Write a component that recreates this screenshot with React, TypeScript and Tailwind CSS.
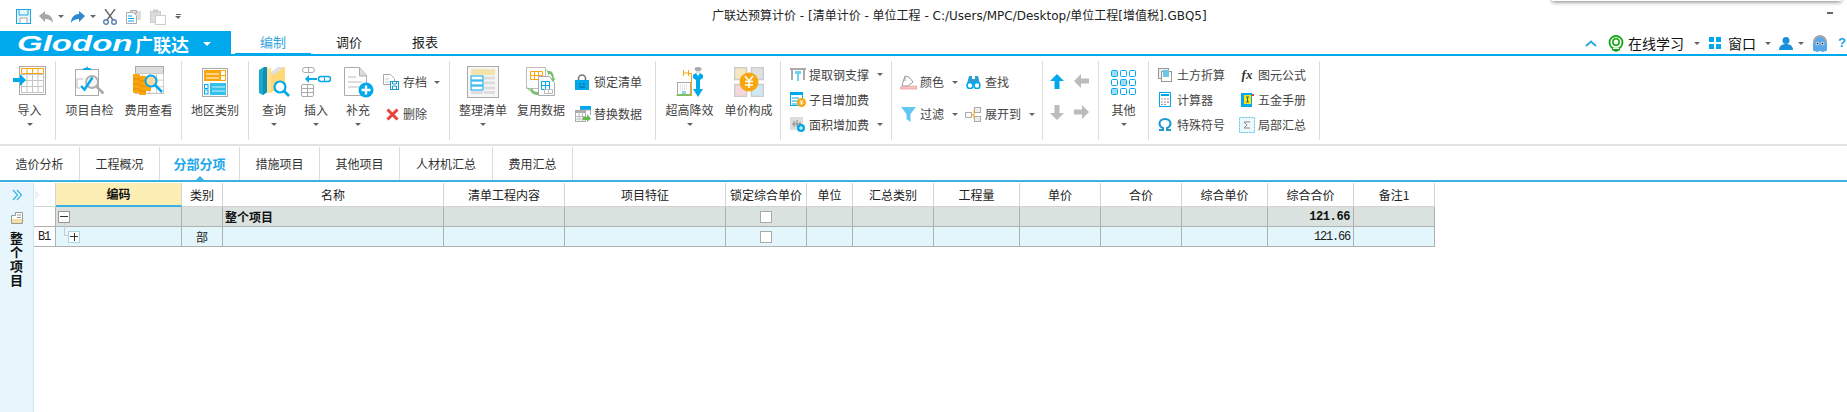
import type { ReactNode } from 'react'

const CJK = '[font-family:"Noto_Sans_CJK_SC","Liberation_Sans",sans-serif]'
const BLUE = '#00a8ec'
const ORANGE = '#f9a60e'
const GRAY = '#b4b4b4'

const COLS = 'grid grid-cols-[22px_126px_41px_221px_121px_161px_81px_46px_81px_86px_81px_81px_86px_86px_81px]'

function Caret({ className = '' }: { className?: string }) {
  return <span className={`inline-block w-0 h-0 border-x-[3.5px] border-x-transparent border-t-[3.5px] border-t-[#666] ${className}`} />
}

function Svg({ w, h, children }: { w: number; h: number; children: ReactNode }) {
  return (
    <svg width={w} height={h} viewBox={`0 0 ${w} ${h}`} fill="none" className="block shrink-0">
      {children}
    </svg>
  )
}

function Table32({ x, y, cols, rows, cw, ch, color = GRAY }: { x: number; y: number; cols: number; rows: number; cw: number; ch: number; color?: string }) {
  const lines = []
  for (let i = 0; i <= cols; i++) lines.push(<path key={`c${i}`} d={`M${x + i * cw} ${y}V${y + rows * ch}`} stroke={color} />)
  for (let i = 0; i <= rows; i++) lines.push(<path key={`r${i}`} d={`M${x} ${y + i * ch}H${x + cols * cw}`} stroke={color} />)
  return <>{lines}</>
}

/* ribbon large icons */
const ImportIcon = (
  <Svg w={34} h={32}>
    <rect x="6.5" y="0.5" width="26" height="28" fill="#fff" stroke="#aaa" />
    <Table32 x={8.5} y={2.5} cols={4} rows={1} cw={5.5} ch={5} color={ORANGE} />
    <Table32 x={8.5} y={8.5} cols={4} rows={3} cw={5.5} ch={6} color="#c4c4c4" />
    <path d="M0 12h7V8l6 6-6 6v-4H0z" fill={BLUE} />
  </Svg>
)
const CheckIcon = (
  <Svg w={32} h={32}>
    <rect x="1.5" y="3.5" width="23" height="26" stroke="#aaa" fill="#fff" />
    <path d="M8 4h10l-2-2h-2l-1-2-1 2h-2z" fill={BLUE} />
    <path d="M3 13h6M3 13v9h3" stroke="#bbb" />
    <circle cx="18" cy="16" r="6" stroke="#b0b0b0" strokeWidth="1.8" fill="#f4f4f4" />
    <path d="M22.500 20.500l7 7" stroke="#aaa" strokeWidth="2.6" />
    <path d="M7 20l3.500 3.500 8-12" stroke={BLUE} strokeWidth="2.4" />
  </Svg>
)
const FeeIcon = (
  <Svg w={32} h={32}>
    <rect x="2.5" y="0.5" width="28" height="27" fill="#fff" stroke="#aaa" />
    <rect x="3" y="1" width="27" height="6" fill="#ddd" />
    <Table32 x={2.5} y={7.5} cols={4} rows={3} cw={7} ch={6.6} color="#ccc" />
    <rect x="0" y="8" width="7" height="19" rx="1" fill={ORANGE} />
    <rect x="6" y="10" width="7" height="19" rx="1" fill={ORANGE} />
    <path d="M0 13h7M0 18h7M0 23h7M6 15h7M6 20h7M6 25h7" stroke="#e08a00" />
    <rect x="13" y="12" width="5" height="13" fill={ORANGE} />
    <circle cx="18" cy="15" r="5.5" fill="#fbd9a0" stroke={BLUE} strokeWidth="2" />
    <path d="M22 19l7 7" stroke={BLUE} strokeWidth="2.5" />
  </Svg>
)
const RegionIcon = (
  <Svg w={26} h={29}>
    <rect x="0.5" y="0.5" width="25" height="28" fill="#fff" stroke="#aaa" />
    <rect x="2" y="2" width="22" height="11" fill={ORANGE} />
    <path d="M4 6h13M4 10h13" stroke="#fff" />
    <rect x="19" y="3" width="4" height="4" fill="#fff" />
    <rect x="19" y="8" width="4" height="4" fill="#fff" />
    <rect x="8" y="15" width="16" height="12" fill="#33c0ea" />
    <path d="M10 19h13M10 23h13" stroke="#d5f1fb" />
    <rect x="2.5" y="16.5" width="3.5" height="4" stroke={BLUE} />
    <rect x="2.5" y="22" width="3.5" height="4" stroke={BLUE} />
  </Svg>
)
const BookIcon = (
  <Svg w={32} h={32}>
    <path d="M1 4l5-3h3v25l-4 3-4-2z" fill="#19aacb" />
    <path d="M6 1h3v25l-4 3V5z" fill="#0d90b8" />
    <path d="M9 2h4v25H9z" fill="#ffe08e" />
    <path d="M13 7l8-6h6v24H15l-2 2z" fill="#ffd878" />
    <path d="M13 6l7-5h6l-9 7-4 1z" fill="#e0e0e0" />
    <circle cx="22" cy="21" r="5.5" fill="#fff" stroke={BLUE} strokeWidth="2.2" />
    <path d="M26 25l5 5" stroke={BLUE} strokeWidth="2.6" />
  </Svg>
)
const InsertIcon = (
  <Svg w={31} h={30}>
    <rect x="1.5" y="0.5" width="12" height="5" rx="2.5" stroke="#aaa" />
    <path d="M7.5 1v4" stroke="#aaa" />
    <rect x="17.5" y="9.5" width="12" height="5" rx="2.5" stroke={BLUE} strokeWidth="1.4" />
    <path d="M23.5 10v4" stroke={BLUE} />
    <path d="M16 11H8V8l-4 4 4 4v-3h8z" fill={BLUE} />
    <rect x="0.5" y="17.5" width="12" height="12" rx="1.5" stroke="#aaa" />
    <path d="M0 21.5h12M0 25.5h12M6.5 18v12" stroke="#aaa" />
  </Svg>
)
const AddDocIcon = (
  <Svg w={31} h={31}>
    <path d="M1.5 0.5h15l7 8v20h-22z" fill="#fff" stroke="#aaa" />
    <path d="M16.5 1v8h7" fill="#ddd" stroke="#aaa" />
    <path d="M5 10h8M5 15h14M5 20h11" stroke="#ddd" strokeWidth="2" />
    <circle cx="23" cy="23" r="7.5" fill={BLUE} />
    <path d="M18.5 23h9M23 18.5v9" stroke="#fff" strokeWidth="2.4" />
  </Svg>
)
const ListIcon = (
  <Svg w={32} h={32}>
    <rect x="0.5" y="0.5" width="31" height="31" fill="#f6f6f6" stroke="#aaa" />
    <rect x="4" y="3" width="24" height="6" fill="#f5e3ac" />
    <rect x="4" y="10" width="12" height="4" fill="#fff" stroke={BLUE} />
    <rect x="4" y="15" width="12" height="4" fill="#fff" stroke={BLUE} />
    <rect x="4" y="20" width="12" height="4" fill="#fff" stroke={BLUE} />
    <rect x="4" y="25" width="12" height="3" fill="#ddd" />
    <path d="M17 12h11M17 17h11M17 22h11M17 26.5h11" stroke="#ddd" strokeWidth="3" />
  </Svg>
)
const ReuseIcon = (
  <Svg w={30} h={31}>
    <rect x="0.5" y="0.5" width="19" height="21" fill="#fff" stroke="#bbb" />
    <Table32 x={4.5} y={4.5} cols={3} rows={2} cw={4} ch={4} color={ORANGE} />
    <path d="M12.5 9.5h11l5 6v13h-16z" fill="#fff" stroke="#aaa" />
    <Table32 x={15.5} y={14.5} cols={2} rows={2} cw={4} ch={4} color={BLUE} />
    <Table32 x={18.5} y={22.5} cols={2} rows={1} cw={4} ch={4} color="#bbb" />
    <path d="M20 2l2 2h2c3 1 4 4 4 8l2-1-3 4-3-4 2 1c0-3-1-5-3-5v2z" fill="#7dbf6e" />
    <path d="M1 19l3 4 2-2c1 3 3 4 6 4v3c-4 0-7-2-8-5l-1 1z" fill="#7dbf6e" />
  </Svg>
)
const StaffIcon = (
  <Svg w={30} h={31}>
    <rect x="2.5" y="15.5" width="13" height="12" fill="#fff" stroke="#aaa" />
    <path d="M5 18h8M5 20h8M5 22h8" stroke="#ccc" strokeDasharray="1 1" />
    <path d="M7 24h4v3H7z" fill="#8fd0ea" />
    <path d="M1 29h16l-2-2H3z" fill="#7cc05f" />
    <path d="M8.5 3v6M13.5 3v6M8.5 6h5M14 6.500h2.500V29" stroke={ORANGE} />
    <ellipse cx="23" cy="2" rx="3.5" ry="2" fill="#aaa" />
    <path d="M21 4h4v2h-4z" fill="#ddd" />
    <path d="M18 8l3-2 2 3 2-3 3 2v3l-3 2h-4l-3-2z" fill={BLUE} />
    <path d="M21 13h4v9h3l-5 8-5-8h3z" fill={BLUE} />
  </Svg>
)
const CompositionIcon = (
  <Svg w={30} h={30}>
    <rect x="0.5" y="0.5" width="12" height="12" fill="#f5e8c0" stroke="#ccc" strokeWidth="1.6" />
    <rect x="17.5" y="0.5" width="12" height="12" fill="#e0e0e0" stroke="#ccc" strokeWidth="1.6" />
    <rect x="0.5" y="17.5" width="12" height="12" fill="#f6d7dc" stroke="#ccc" strokeWidth="1.6" />
    <rect x="17.5" y="17.5" width="12" height="12" fill="#cfe8f3" stroke="#ccc" strokeWidth="1.6" />
    <circle cx="15" cy="15" r="9.5" fill={ORANGE} />
    <path d="M11 9l4 5 4-5M15 14v7M11 14.5h8M11 18h8" stroke="#fff" strokeWidth="1.6" />
  </Svg>
)
const OtherIcon = (
  <Svg w={25} h={25}>
    {[0, 9, 18].map(y =>
      [0, 9, 18].map(x => (
        <rect key={`${x}-${y}`} x={x + 0.5} y={y + 0.5} width="6" height="6" rx="1" fill={(x + y) % 2 === 0 && x !== 18 ? '#9fdcf5' : '#fff'} stroke={BLUE} />
      ))
    )}
  </Svg>
)

/* ribbon small icons */
const small = {
  archive: (
    <Svg w={17} h={16}>
      <path d="M1.5 0.5h7l4 4v6h-11z" fill="#fff" stroke="#aaa" />
      <path d="M3 5h4M3 8h5" stroke="#ccc" />
      <rect x="8.5" y="7.5" width="8" height="8" fill="#fff" stroke="#1a9ccc" />
      <path d="M10.5 8v2h4V8M10.5 15v-3h4v3" stroke="#1a9ccc" />
    </Svg>
  ),
  remove: (
    <Svg w={13} h={13}>
      <path d="M1.5 1.5l10 10M11.5 1.5l-10 10" stroke="#e8423a" strokeWidth="3" />
    </Svg>
  ),
  lock: (
    <Svg w={14} h={16}>
      <path d="M3.5 7V4.5a3.5 3.5 0 0 1 7 0V7" stroke="#777" strokeWidth="1.6" />
      <rect x="0" y="6" width="14" height="10" fill={BLUE} />
      <path d="M4 10h2M8 10h2M4 13h6" stroke="#0a5f88" />
    </Svg>
  ),
  replace: (
    <Svg w={16} h={16}>
      <rect x="5" y="0" width="11" height="4" fill={BLUE} />
      <path d="M5.5 4h10v5" stroke="#aaa" />
      <rect x="0.5" y="4.5" width="10" height="11" fill="#fff" stroke="#aaa" />
      <rect x="0" y="4" width="11" height="3" fill="#aaa" />
      <path d="M0 10.5h10M0 13h10M4 5v11M7.5 5v11" stroke="#bbb" />
      <path d="M8 11h4V8l4 4.5L12 16v-2H8z" fill="#62b84a" />
    </Svg>
  ),
  steel: (
    <Svg w={16} h={13}>
      <path d="M0 1h16M2 1v11M14 1v11" stroke="#aaa" strokeWidth="2" />
      <path d="M5 3h6v3H5zM7 6h2v7H7z" fill="#6fd0f0" />
    </Svg>
  ),
  subFee: (
    <Svg w={16} h={15}>
      <rect x="0.5" y="0.5" width="12" height="13" fill="#fff" stroke={BLUE} />
      <rect x="0" y="0" width="13" height="3" fill={BLUE} />
      <path d="M2 6h7M2 9h6M2 12h5" stroke={BLUE} />
      <circle cx="11.5" cy="10.5" r="4.5" fill={ORANGE} />
      <path d="M10 8l1.5 2L13 8M9.5 11h4M11.5 10v3" stroke="#fff" />
    </Svg>
  ),
  areaFee: (
    <Svg w={15} h={15}>
      <rect x="0" y="0" width="13" height="13" fill="#ddd" />
      <path d="M2 7h9M4 4v6M7 3v7M10 5v4" stroke="#888" />
      <circle cx="11" cy="11" r="4" fill={BLUE} />
      <path d="M9 11h4M11 9v4" stroke="#fff" />
    </Svg>
  ),
  color: (
    <Svg w={17} h={15}>
      <path d="M5 1l4 1 4 5-5 4H2l1-4z" fill="#fff" stroke="#999" />
      <path d="M5 2v4" stroke="#999" />
      <path d="M0 12l17-1v3H0z" fill="#f6c9c6" stroke="#e88" strokeWidth=".6" />
    </Svg>
  ),
  find: (
    <Svg w={15} h={14}>
      <path d="M1 9l2-8h3v3h3V1h3l2 8z" fill="#2a9fd6" />
      <circle cx="4" cy="10.5" r="3" fill="#fff" stroke={BLUE} strokeWidth="1.6" />
      <circle cx="11" cy="10.5" r="3" fill="#fff" stroke={BLUE} strokeWidth="1.6" />
    </Svg>
  ),
  filter: (
    <Svg w={15} h={15}>
      <path d="M0 0h15L9.5 7v8l-4-3V7z" fill="#63c8f0" />
    </Svg>
  ),
  expand: (
    <Svg w={16} h={15}>
      <rect x="0.5" y="5.5" width="6" height="5" stroke="#aaa" />
      <rect x="9.5" y="0.5" width="6" height="5" stroke="#aaa" fill="#eee" />
      <rect x="9.5" y="9.5" width="6" height="5" stroke="#aaa" fill="#eee" />
      <path d="M7 8h2M9 3v9" stroke={ORANGE} />
    </Svg>
  ),
  earth: (
    <Svg w={14} h={14}>
      <rect x="0.5" y="0.5" width="10" height="10" fill="#eee" stroke="#999" />
      <rect x="3.5" y="3.5" width="10" height="10" fill="#fff" stroke="#999" />
      <rect x="5" y="2" width="6" height="7" fill="#6dc8e8" />
    </Svg>
  ),
  calc: (
    <Svg w={12} h={15}>
      <rect x="0.5" y="0.5" width="11" height="14" fill="#fff" stroke={BLUE} />
      <path d="M2 3h8" stroke={BLUE} strokeWidth="2" />
      <path d="M2 7h2M5 7h2M8 7h2M2 10h2M5 10h2M2 12.5h2M5 12.5h2" stroke="#999" />
      <path d="M8 10h2" stroke="#e33" />
    </Svg>
  ),
  omega: (
    <Svg w={14} h={13}>
      <path d="M1 12h4V10C2.5 9 1.500 7.500 1.500 5.500 1.500 3 3.800 1 7 1s5.500 2 5.500 4.500C12.500 7.500 11.500 9 9 10v2h4" stroke="#1a9ad0" strokeWidth="2" />
    </Svg>
  ),
  manual: (
    <Svg w={13} h={14}>
      <rect x="0" y="0" width="11" height="14" fill={BLUE} />
      <rect x="3" y="2" width="7" height="9" fill="#ffe600" />
      <path d="M5 4h3M6.5 4v5M5 9h3" stroke="#1a6fa0" />
      <rect x="11" y="1" width="2" height="2" fill="#e33" />
    </Svg>
  ),
  sum: (
    <Svg w={16} h={16}>
      <rect x="0.5" y="0.5" width="15" height="15" fill="#eef8fc" stroke="#58c4ea" strokeDasharray="2 1" />
      <path d="M11 5H5l3 3-3 3h6" stroke="#888" />
    </Svg>
  ),
}

function Arrow({ dir, active }: { dir: 'up' | 'down' | 'left' | 'right'; active?: boolean }) {
  const paths = {
    up: 'M7 0l7 7H9.500v8h-5V7H0z',
    down: 'M7 15l7-7H9.500V0h-5v8H0z',
    left: 'M0 7l7-7v4.500h8v5H7V14z',
    right: 'M15 7L8 0v4.500H0v5h8V14z',
  }
  return (
    <Svg w={15} h={15}>
      <path d={paths[dir]} fill={active ? BLUE : '#bcbcbc'} />
    </Svg>
  )
}

function LargeButton({ icon, label, width, caret }: { icon: ReactNode; label: string; width: string; caret?: boolean }) {
  return (
    <div className={`flex flex-col items-center pt-[5px] ${width}`}>
      <div className="h-[32px] flex items-center justify-center">{icon}</div>
      <div className="mt-[5px] text-[12px] leading-[14px] text-[#444] whitespace-nowrap">{label}</div>
      {caret && <Caret className="mt-[6px]" />}
    </div>
  )
}

function SmallButton({ icon, label, iconBox = 'w-[17px]', gap = 'ml-[3px]', caret, height = 'h-[25px]' }: { icon: ReactNode; label: string; iconBox?: string; gap?: string; caret?: string; height?: string }) {
  return (
    <div className={`flex items-center ${height}`}>
      <div className={`flex justify-center ${iconBox}`}>{icon}</div>
      <span className={`text-[12px] leading-[14px] text-[#444] whitespace-nowrap ${gap}`}>{label}</span>
      {caret && <Caret className={caret} />}
    </div>
  )
}

function Group({ width, className = '', children }: { width: string; className?: string; children: ReactNode }) {
  return <div className={`h-[79px] shrink-0 flex border-r border-[#dcdcdc] ${width} ${className}`}>{children}</div>
}

function QuickAccess() {
  return (
    <div className="w-[712px] shrink-0 flex items-center pl-[16px] pt-[2px]">
      <Svg w={15} h={15}>
        <rect x="0.5" y="0.5" width="14" height="14" stroke="#1aa9df" fill="#e9f7fc" />
        <path d="M3 1v5h9V1" stroke="#1aa9df" />
        <path d="M4 14V9h7v5" fill="#fff" stroke="#aaa" />
      </Svg>
      <div className="ml-[8px]">
        <Svg w={14} h={12}>
          <path d="M0 5l6-5v3c4 0 8 3 8 9-2-3-4-4-8-4v3z" fill="#a8a8a8" />
        </Svg>
      </div>
      <Caret className="ml-[5px]" />
      <div className="ml-[7px]">
        <Svg w={14} h={12}>
          <path d="M14 5L8 0v3C4 3 0 6 0 12c2-3 4-4 8-4v3z" fill="#2b88d0" />
        </Svg>
      </div>
      <Caret className="ml-[5px]" />
      <div className="ml-[7px]">
        <Svg w={14} h={16}>
          <path d="M2 0l8 11M12 0L4 11" stroke="#666" strokeWidth="1.4" />
          <circle cx="3" cy="13" r="2.3" stroke="#5a80b5" strokeWidth="1.4" />
          <circle cx="11" cy="13" r="2.3" stroke="#5a80b5" strokeWidth="1.4" />
        </Svg>
      </div>
      <div className="ml-[9px]">
        <Svg w={16} h={15}>
          <path d="M4.5 1.5h6v3h-6z" fill="#ddd" stroke="#aaa" />
          <path d="M0.5 3.5h7l3 3v8h-10z" fill="#fff" stroke="#aaa" />
          <path d="M2 7h4M2 9.500h6M2 12h6" stroke={BLUE} />
          <path d="M11 2h4v9h-4z" fill="#ddd" />
        </Svg>
      </div>
      <div className="ml-[8px]">
        <Svg w={16} h={16}>
          <rect x="0.5" y="2.5" width="10" height="11" fill="#ddd" stroke="#ccc" />
          <rect x="3" y="0.5" width="5" height="3" fill="#ccc" />
          <rect x="5.5" y="6.5" width="10" height="9" fill="#fff" stroke="#ccc" />
        </Svg>
      </div>
      <div className="ml-[9px] flex flex-col items-center gap-[1px]">
        <span className="w-[5px] h-[1px] bg-[#666]" />
        <Caret className="border-x-[2.5px] border-t-[3px]" />
      </div>
    </div>
  )
}

function MainTabs() {
  return (
    <div className="h-[25px] flex bg-white border-b-2 border-[#00a8ec] relative">
      <div className="w-[231px] h-[25px] shrink-0 bg-[#00a8ec] flex items-center pl-[17px] text-white">
        <span className="w-[116px] shrink-0 origin-left scale-x-[1.5] text-[22px] leading-[25px] font-bold italic [font-family:'Liberation_Sans',sans-serif]">Glodon</span>
        <span className="ml-[2px] text-[18px] leading-[20px] font-bold">广联达</span>
        <Caret className="ml-[14px] border-t-white border-x-[4px] border-t-[4px]" />
      </div>
      <div className="ml-[4px] w-[76px] h-[24px] -mb-px text-center text-[13px] leading-[19px] pt-[1px] text-[#35a4dd] border-b-[2px] border-[#00a8ec]">编制</div>
      <div className="w-[76px] text-center text-[13px] leading-[19px] pt-[1px] text-[#222]">调价</div>
      <div className="w-[76px] text-center text-[13px] leading-[19px] pt-[1px] text-[#222]">报表</div>
      <div className="ml-auto pr-[1px] flex items-center h-[23px] pt-[1px]">
        <Svg w={12} h={7}>
          <path d="M1 6l5-4.500L11 6" stroke="#2aa7e0" strokeWidth="2" />
        </Svg>
        <div className="ml-[11px]">
          <Svg w={16} h={17}>
            <circle cx="8" cy="7.5" r="6.5" stroke="#19a319" strokeWidth="1.8" />
            <circle cx="8" cy="7" r="3.2" stroke="#19a319" strokeWidth="1.5" />
            <path d="M3.5 15c1.500-3 7.500-3 9 0l-4.500 2z" fill="#19a319" />
            <rect x="5" y="13" width="6" height="1" fill="#fff" />
          </Svg>
        </div>
        <span className="ml-[4px] text-[14px] leading-[16px] text-[#111]">在线学习</span>
        <Caret className="ml-[10px]" />
        <div className="ml-[9px]">
          <Svg w={12} h={12}>
            <path d="M0 0h5v5H0zM7 0h5v5H7zM0 7h5v5H0zM7 7h5v5H7z" fill={BLUE} />
          </Svg>
        </div>
        <span className="ml-[7px] text-[14px] leading-[16px] text-[#111]">窗口</span>
        <Caret className="ml-[9px]" />
        <div className="ml-[8px]">
          <Svg w={14} h={13}>
            <circle cx="7" cy="3.5" r="3.5" fill="#1a90d8" />
            <path d="M0 13c0-4 3-6 7-6s7 2 7 6z" fill="#1a90d8" />
          </Svg>
        </div>
        <Caret className="ml-[5px]" />
        <div className="ml-[8px]">
          <Svg w={16} h={17}>
            <path d="M1 8a7 7 0 0 1 14 0v6c0 2-1 3-2 2l-2 1-3-1-3 1-2-1c-1 1-2 0-2-2z" fill="#5aa8e8" />
            <path d="M1 7a7 7 0 0 1 14 0h-2a5 5 0 0 0-10 0z" fill="#a8a8a8" />
            <circle cx="5.5" cy="8.5" r="1.8" fill="#fff" />
            <circle cx="10.5" cy="8.5" r="1.8" fill="#fff" />
            <circle cx="5.5" cy="8.5" r="1" fill="#223" />
            <circle cx="10.5" cy="8.5" r="1" fill="#223" />
          </Svg>
        </div>
        <span className="ml-[10px] text-[13px] leading-[16px] font-bold text-[#19a0e6] [font-family:'Liberation_Sans',sans-serif]">?</span>
      </div>
    </div>
  )
}

function Ribbon() {
  return (
    <div className="h-[90px] border-b-[2px] border-[#e2e2e2] flex pt-[5px] overflow-hidden">
      <Group width="w-[56px]">
        <LargeButton icon={ImportIcon} label="导入" width="w-[55px] pl-[4px]" caret />
      </Group>
      <Group width="w-[126px]" className="pl-[4px]">
        <LargeButton icon={CheckIcon} label="项目自检" width="w-[59px]" />
        <LargeButton icon={FeeIcon} label="费用查看" width="w-[59px]" />
      </Group>
      <Group width="w-[67px]">
        <LargeButton icon={RegionIcon} label="地区类别" width="w-[66px]" />
      </Group>
      <Group width="w-[201px]" className="pl-[4px]">
        <LargeButton icon={BookIcon} label="查询" width="w-[42px]" caret />
        <LargeButton icon={InsertIcon} label="插入" width="w-[42px]" caret />
        <LargeButton icon={AddDocIcon} label="补充" width="w-[42px]" caret />
        <div className="ml-[3px] pt-[5px]">
          <SmallButton icon={small.archive} label="存档" height="h-[32px]" gap="ml-[4px]" caret="ml-[7px]" />
          <div className="pl-[3px]">
            <SmallButton icon={small.remove} label="删除" iconBox="w-[14px]" height="h-[32px]" gap="ml-[4px]" />
          </div>
        </div>
      </Group>
      <Group width="w-[206px]" className="pl-[4px]">
        <LargeButton icon={ListIcon} label="整理清单" width="w-[58px]" caret />
        <LargeButton icon={ReuseIcon} label="复用数据" width="w-[58px]" />
        <div className="ml-[5px] pt-[5px]">
          <SmallButton icon={small.lock} label="锁定清单" iconBox="w-[14px]" height="h-[32px]" gap="ml-[5px]" />
          <SmallButton icon={small.replace} label="替换数据" iconBox="w-[15px]" height="h-[32px]" gap="ml-[4px]" />
        </div>
      </Group>
      <Group width="w-[125px]" className="pl-[4px]">
        <LargeButton icon={StaffIcon} label="超高降效" width="w-[59px]" caret />
        <LargeButton icon={CompositionIcon} label="单价构成" width="w-[59px]" />
      </Group>
      <Group width="w-[111px]" className="flex-col pl-[8px] pt-[1px]">
        <SmallButton icon={small.steel} label="提取钢支撑" gap="ml-[3px]" caret="ml-[8px]" />
        <SmallButton icon={small.subFee} label="子目增加费" gap="ml-[3px]" />
        <SmallButton icon={small.areaFee} label="面积增加费" gap="ml-[3px]" caret="ml-[8px]" />
      </Group>
      <Group width="w-[151px]" className="pl-[8px] pt-[5px]">
        <div>
          <SmallButton icon={small.color} label="颜色" height="h-[32px]" gap="ml-[3px]" caret="ml-[8px]" />
          <SmallButton icon={small.filter} label="过滤" height="h-[32px]" gap="ml-[3px]" caret="ml-[8px]" />
        </div>
        <div className="ml-[7px]">
          <SmallButton icon={small.find} label="查找" height="h-[32px]" iconBox="w-[16px]" gap="ml-[4px]" />
          <SmallButton icon={small.expand} label="展开到" height="h-[32px]" iconBox="w-[16px]" gap="ml-[4px]" caret="ml-[8px]" />
        </div>
      </Group>
      <Group width="w-[56px]" className="pl-[7px] pt-[13px] gap-x-[9px]">
        <div className="flex flex-col gap-y-[16px]">
          <Arrow dir="up" active />
          <Arrow dir="down" />
        </div>
        <div className="flex flex-col gap-y-[16px]">
          <Arrow dir="left" />
          <Arrow dir="right" />
        </div>
      </Group>
      <Group width="w-[50px]">
        <LargeButton icon={OtherIcon} label="其他" width="w-[49px]" caret />
      </Group>
      <Group width="w-[171px]" className="flex-col pl-[8px] pt-[1px]">
        <div className="flex">
          <div className="w-[83px]"><SmallButton icon={small.earth} label="土方折算" iconBox="w-[16px]" gap="ml-[4px]" /></div>
          <SmallButton icon={<span className="text-[13px] leading-[13px] italic font-bold text-[#333] [font-family:'Liberation_Serif',serif]">fx</span>} label="图元公式" iconBox="w-[14px]" gap="ml-[4px]" />
        </div>
        <div className="flex">
          <div className="w-[83px]"><SmallButton icon={small.calc} label="计算器" iconBox="w-[16px]" gap="ml-[4px]" /></div>
          <SmallButton icon={small.manual} label="五金手册" iconBox="w-[14px]" gap="ml-[4px]" />
        </div>
        <div className="flex">
          <div className="w-[83px]"><SmallButton icon={small.omega} label="特殊符号" iconBox="w-[16px]" gap="ml-[4px]" /></div>
          <SmallButton icon={small.sum} label="局部汇总" iconBox="w-[14px]" gap="ml-[4px]" />
        </div>
      </Group>
    </div>
  )
}

function SubTabs() {
  const tabs = [
    { label: '造价分析', w: 'w-[80px]' },
    { label: '工程概况', w: 'w-[80px]' },
    { label: '分部分项', w: 'w-[80px]', active: true },
    { label: '措施项目', w: 'w-[80px]' },
    { label: '其他项目', w: 'w-[80px]' },
    { label: '人材机汇总', w: 'w-[93px]' },
    { label: '费用汇总', w: 'w-[80px]' },
  ]
  return (
    <div className="h-[36px] pt-[1px] flex border-b-[2px] border-[#3ab1e0]">
      {tabs.map(tab => (
        <div
          key={tab.label}
          className={`relative h-[33px] border-r border-[#dcdcdc] flex items-center justify-center text-[12px] ${tab.w} ${tab.active ? 'text-[13px] font-bold text-[#1fa8ea]' : 'text-[#333]'}`}
        >
          {tab.label}
          {tab.active && <span className="absolute left-[36px] bottom-0 w-0 h-0 border-x-[4px] border-x-transparent border-b-[4px] border-b-[#3ab1e0]" />}
        </div>
      ))}
    </div>
  )
}

function Sidebar() {
  return (
    <div className="w-[34px] shrink-0 bg-[#e6f6fc] border-r border-[#d5e4ea] flex flex-col items-center pt-[6px]">
      <Svg w={10} h={12}>
        <path d="M1 1l4.500 5L1 11M5 1l4.500 5L5 11" stroke="#3ab1e0" strokeWidth="1.2" />
      </Svg>
      <div className="mt-[11px]">
        <Svg w={12} h={12}>
          <path d="M0.5 3.500h4v-3h7v11h-11z" fill="#fff" stroke="#999" />
          <path d="M6 3h4M6 5.500h4" stroke="#999" />
          <rect x="1" y="7" width="10" height="4" fill="#f2dfa5" />
        </Svg>
      </div>
      <div className="mt-[7px] w-[13px] text-[13px] leading-[14px] font-bold text-center text-[#111]">整个项目</div>
    </div>
  )
}

function Checkbox() {
  return <span className="w-[12px] h-[12px] bg-white border border-[#aaa] block" />
}

function DataTable() {
  const headers = ['清单工程内容', '项目特征', '锁定综合单价', '单位', '汇总类别', '工程量', '单价', '合价', '综合单价', '综合合价', '备注1']
  const cell = 'border-r border-b border-[#b0b0b0] h-[20px] flex items-center'
  const blanks = ['清单工程内容', '项目特征']
  const rest = ['单位', '汇总类别', '工程量', '单价', '合价', '综合单价']
  const mono = "justify-end pr-[3px] [font-family:'Liberation_Mono',monospace]"

  return (
    <div className="text-[12px] text-[#222]">
      <div className={COLS}>
        <div className="h-[24px] border-r border-b border-[#d4d4d4] flex items-center">
          <span className="w-0 h-0 ml-px border-y-[5px] border-y-transparent border-l-[5px] border-l-[#eef2f4]" />
        </div>
        <div className="h-[24px] bg-[#fdeeb5] border-b-2 border-[#3ab1e0] border-r border-r-[#d4d4d4] flex items-center justify-center font-bold text-[#111]">编码</div>
        <div className="h-[24px] border-r border-b border-[#d4d4d4] flex items-center justify-center">类别</div>
        <div className="h-[24px] border-r border-b border-[#d4d4d4] flex items-center justify-center">名称</div>
        {headers.map(h => (
          <div key={h} className="h-[24px] border-r border-b border-[#d4d4d4] flex items-center justify-center whitespace-nowrap">{h}</div>
        ))}
      </div>

      <div className={`${COLS} bg-[#d9e2de]`}>
        <div className={`${cell} bg-white`} />
        <div className={`${cell} pl-[2px]`}>
          <span className="w-[12px] h-[12px] bg-white border border-[#999] flex items-center justify-center">
            <span className="w-[8px] h-px bg-[#333]" />
          </span>
        </div>
        <div className={cell} />
        <div className={`${cell} font-bold text-[#111] pl-[2px]`}>整个项目</div>
        {blanks.map(b => <div key={b} className={cell} />)}
        <div className={`${cell} justify-center`}><Checkbox /></div>
        {rest.map(b => <div key={b} className={cell} />)}
        <div className={`${cell} ${mono} text-[12px] tracking-[-0.4px] font-bold text-[#111]`}>121.66</div>
        <div className={cell} />
      </div>

      <div className={`${COLS} bg-[#e3f6fb]`}>
        <div className={`${cell} bg-white pl-[4px] text-[12px] tracking-[-1.2px] [font-family:'Liberation_Mono',monospace]`}>B1</div>
        <div className={`${cell} pl-[8px] relative`}>
          <span className="absolute left-[8px] top-[-4px] w-[5px] h-[13px] border-l border-b border-[#ccc]" />
          <span className="ml-[4px] w-[12px] h-[12px] bg-white border border-[#a8d4e6] flex items-center justify-center text-[#222] relative">
            <span className="w-[8px] h-px bg-[#333]" />
            <span className="absolute left-[4.5px] top-[1.5px] w-px h-[8px] bg-[#333]" />
          </span>
        </div>
        <div className={`${cell} justify-center`}>部</div>
        <div className={cell} />
        {blanks.map(b => <div key={b} className={cell} />)}
        <div className={`${cell} justify-center`}><Checkbox /></div>
        {rest.map(b => <div key={b} className={cell} />)}
        <div className={`${cell} ${mono} text-[12px] tracking-[-1.2px]`}>121.66</div>
        <div className={cell} />
      </div>
    </div>
  )
}

export default function App() {
  return (
    <div className={`relative w-[1847px] h-[412px] overflow-hidden bg-white flex flex-col ${CJK}`}>
      <div className="h-[31px] shrink-0 flex items-center">
        <QuickAccess />
        <span className="text-[12px] text-[#222] whitespace-nowrap [font-family:'DejaVu_Sans','Noto_Sans_CJK_SC',sans-serif]">广联达预算计价 - [清单计价 - 单位工程 - C:/Users/MPC/Desktop/单位工程[增值税].GBQ5]</span>
      </div>
      <MainTabs />
      <Ribbon />
      <SubTabs />
      <div className="flex-1 flex pt-px min-h-0">
        <Sidebar />
        <DataTable />
      </div>
      {/* edge of another window's shadow and its minimise mark */}
      <div className="absolute left-[1552px] top-[-6px] w-[289px] h-[7px] bg-white shadow-[0_1px_4px_rgba(0,0,0,0.5)]" />
      <span className="absolute left-[1827px] top-[12px] w-[6px] h-[2px] bg-[#666]" />
    </div>
  )
}
